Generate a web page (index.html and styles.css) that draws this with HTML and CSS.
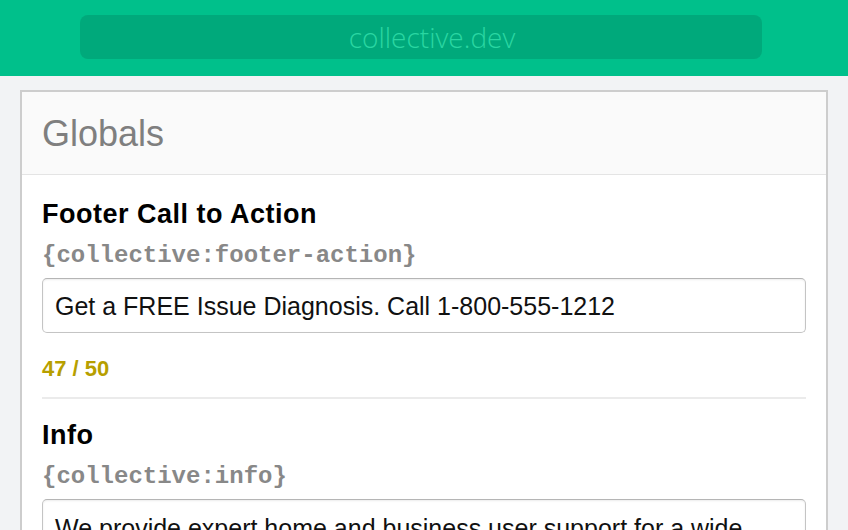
FILE: index.html
```html
<!DOCTYPE html>
<html>
<head>
<meta charset="utf-8">
<link rel="stylesheet" href="styles.css">
</head>
<body>
<header class="topbar">
  <div class="address">collective.dev</div>
</header>
<main class="panel">
  <div class="panel-head">Globals</div>
  <div class="panel-body">
    <section class="field">
      <h2 class="field-title">Footer Call to Action</h2>
      <div class="field-tag">{collective:footer-action}</div>
      <div class="input">Get a FREE Issue Diagnosis. Call 1-800-555-1212</div>
      <div class="counter">47 / 50</div>
    </section>
    <section class="field">
      <h2 class="field-title">Info</h2>
      <div class="field-tag">{collective:info}</div>
      <div class="input textarea">We provide expert home and business user support for a wide range of technology issues.</div>
    </section>
  </div>
</main>
</body>
</html>
```

FILE: styles.css
```css
html, body {
  margin: 0;
  padding: 0;
}
body {
  background: #f2f3f5;
  font-family: "Liberation Sans", Arial, sans-serif;
  height: 530px;
  overflow: hidden;
}
.topbar {
  background: #00c08b;
  height: 76px;
  box-sizing: border-box;
  padding: 15px 86px 17px 80px;
}
.address {
  height: 44px;
  background: #00a97b;
  border-radius: 8px;
  color: #2ad6a2;
  font-family: "Open Sans", sans-serif;
  font-weight: 300;
  font-size: 28px;
  line-height: 44px;
  text-align: center;
  padding-left: 22px;
}
.panel {
  margin: 14px 20px 0;
  border: 2px solid #cdcdcd;
  background: #fff;
}
.panel-head {
  background: #fafafa;
  border-bottom: 1px solid #e4e4e4;
  height: 83px;
  box-sizing: border-box;
  padding: 22px 20px 0;
  font-size: 36px;
  line-height: 40px;
  color: #7f7f7f;
}
.panel-body {
  padding: 0 20px;
}
.field {
  padding: 20px 0 15px;
  border-bottom: 2px solid #ebebeb;
}
.field:first-child {
  padding-top: 23px;
}
.field-title {
  margin: 0 0 12px;
  font-size: 27px;
  line-height: 32px;
  font-weight: bold;
  letter-spacing: 0.5px;
  color: #000;
}
.field-tag {
  font-family: "Liberation Mono", "Courier New", monospace;
  font-weight: bold;
  font-size: 24px;
  line-height: 28px;
  color: #888;
  margin-bottom: 8px;
}
.input {
  height: 55px;
  box-sizing: border-box;
  border: 1px solid #c4c4c4;
  border-top-color: #b5b5b5;
  border-radius: 5px;
  box-shadow: inset 0 1px 2px rgba(0,0,0,0.08);
  padding: 0 12px;
  display: flex;
  align-items: center;
  font-size: 25px;
  line-height: 30px;
  color: #111;
}
.textarea {
  height: 120px;
  align-items: flex-start;
  padding-top: 13px;
}
.counter {
  margin-top: 23px;
  font-size: 22px;
  line-height: 26px;
  font-weight: bold;
  color: #b79f00;
}
```
